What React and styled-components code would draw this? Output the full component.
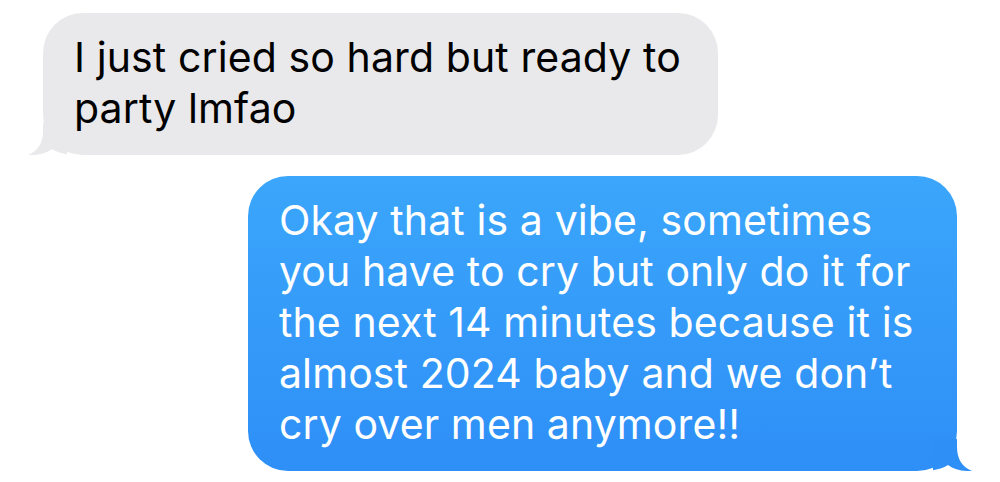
import React from "react";
import styled, { createGlobalStyle } from "styled-components";

const GlobalStyle = createGlobalStyle`
  html, body {
    margin: 0;
    padding: 0;
    background: #fff;
  }
  body {
    font-family: Inter, "Noto Sans", sans-serif;
    -webkit-font-smoothing: antialiased;
  }
`;

const Thread = styled.div`
  display: flex;
  flex-direction: column;
  gap: 21px;
  padding: 13px 43px 0;
  width: 1000px;
  height: 482px;
  box-sizing: border-box;
  overflow: hidden;
`;

const Bubble = styled.div`
  position: relative;
  box-sizing: border-box;
  width: ${p => p.$width}px;
  align-self: ${p => (p.$sent ? "flex-end" : "flex-start")};
  padding: 19px 31px 21px 31px;
  border-radius: 40px;
  background: ${p =>
    p.$sent ? "linear-gradient(180deg, #3ba6fb 0%, #2e8ff7 100%)" : "#e9e9eb"};
  color: ${p => (p.$sent ? "#fff" : "#000")};
  font-size: 41px;
  line-height: 51px;
  letter-spacing: 0.1px;
  white-space: nowrap;
`;

const Tail = styled.svg`
  position: absolute;
  bottom: 0;
  width: 40px;
  height: 32px;
  ${p =>
    p.$sent
      ? "right: -16px; transform: scaleX(-1);"
      : "left: -16px;"}
`;

function BubbleTail({ sent, color }) {
  return (
    <Tail $sent={sent} viewBox="0 0 40 32">
      <path
        d="M16 0 L16 8 C16 20 11 28 1 32 C10 32.5 19 30.5 25 26 C31 30 40 32 52 32 L52 0 Z"
        fill={color}
      />
    </Tail>
  );
}

export default function App() {
  return (
    <>
      <GlobalStyle />
      <Thread>
        <Bubble $width={675}>
          I just cried so hard but ready to
          <br />
          party lmfao
          <BubbleTail color="#e9e9eb" />
        </Bubble>
        <Bubble $sent $width={709}>
          Okay that is a vibe, sometimes
          <br />
          you have to cry but only do it for
          <br />
          the next 14 minutes because it is
          <br />
          almost 2024 baby and we don’t
          <br />
          cry over men anymore!!
          <BubbleTail sent color="#2e8ff7" />
        </Bubble>
      </Thread>
    </>
  );
}
